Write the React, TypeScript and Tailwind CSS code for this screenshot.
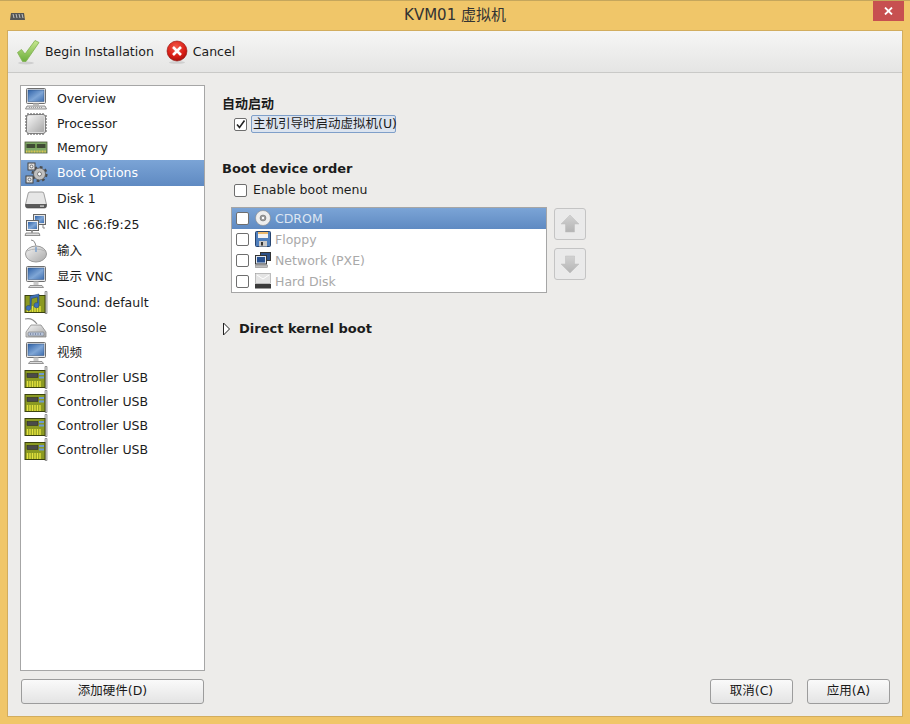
import React from 'react';

const UI_FONT = "font-['DejaVu_Sans','Noto_Sans_CJK_SC',sans-serif]";

const Defs = () => (
  <svg width="0" height="0" className="absolute">
    <defs>
      <linearGradient id="screen" x1="0" y1="0" x2="1" y2="1">
        <stop offset="0" stopColor="#2f62a8" />
        <stop offset="0.55" stopColor="#7fa6d6" />
        <stop offset="1" stopColor="#3e6fb0" />
      </linearGradient>
      <linearGradient id="metal" x1="0" y1="0" x2="1" y2="1">
        <stop offset="0" stopColor="#f4f4f4" />
        <stop offset="1" stopColor="#a8a8a8" />
      </linearGradient>
      <linearGradient id="check" x1="0" y1="0" x2="0" y2="1">
        <stop offset="0" stopColor="#c8e890" />
        <stop offset="1" stopColor="#6cae3c" />
      </linearGradient>
      <radialGradient id="red" cx="0.45" cy="0.3" r="0.8">
        <stop offset="0" stopColor="#f25a4a" />
        <stop offset="0.6" stopColor="#d81c14" />
        <stop offset="1" stopColor="#8e0f0a" />
      </radialGradient>
      <linearGradient id="arrow" x1="0" y1="0" x2="0" y2="1">
        <stop offset="0" stopColor="#d2d2d2" />
        <stop offset="1" stopColor="#b4b4b4" />
      </linearGradient>
    </defs>
  </svg>
);

const Monitor = ({ keyboard }: { keyboard?: boolean }) => (
  <svg width="24" height="24" viewBox="0 0 24 24">
    <rect x="2.500" y="1.500" width="19" height="15" rx="1" fill="#e9e9e9" stroke="#6f6f6f" />
    <rect x="4" y="3" width="16" height="11.500" fill="url(#screen)" stroke="#2d4f80" strokeWidth="0.5" />
    {keyboard ? (
      <>
        <rect x="9" y="16.500" width="6" height="2" fill="#bdbdbd" />
        <path d="M3 19h18l1.500 3h-21z" fill="#e2e2e2" stroke="#777" strokeWidth="0.8" />
        <path d="M5 20.500h14" stroke="#8a8a8a" strokeWidth="0.8" strokeDasharray="1 1" />
      </>
    ) : (
      <>
        <rect x="9.500" y="16.500" width="5" height="3.500" fill="#c9c9c9" />
        <path d="M6 20.500h12l1.500 2h-15z" fill="#dcdcdc" stroke="#7c7c7c" strokeWidth="0.8" />
      </>
    )}
  </svg>
);

const Chip = () => (
  <svg width="24" height="24" viewBox="0 0 24 24">
    <path d="M4 1v3M7 1v3M10 1v3M13 1v3M16 1v3M19 1v3M4 20v3M7 20v3M10 20v3M13 20v3M16 20v3M19 20v3M1 4h3M1 7h3M1 10h3M1 13h3M1 16h3M1 19h3M20 4h3M20 7h3M20 10h3M20 13h3M20 16h3M20 19h3" stroke="#4a4a4a" strokeWidth="1" />
    <rect x="2.500" y="2.500" width="19" height="19" rx="2.500" fill="#dedede" stroke="#6a6a6a" strokeWidth="0.8" />
    <rect x="4" y="4" width="16" height="16" rx="1" fill="url(#metal)" />
  </svg>
);

const Ram = () => (
  <svg width="24" height="24" viewBox="0 0 24 24">
    <rect x="1" y="6" width="22" height="11" fill="#7fa866" stroke="#4f5a3c" strokeWidth="0.8" />
    <rect x="2.500" y="8" width="19" height="4" fill="#3f4a34" />
    <path d="M12 8v4" stroke="#9be26a" strokeWidth="1" />
    <path d="M2 15.500h20" stroke="#e2c652" strokeWidth="2" strokeDasharray="1 0.6" />
  </svg>
);

const Gears = () => (
  <svg width="24" height="24" viewBox="0 0 24 24">
    <circle cx="15.500" cy="13" r="6.800" fill="none" stroke="#4c4c4c" strokeWidth="2.600" strokeDasharray="2.700 2.650" />
    <circle cx="15.500" cy="13" r="6" fill="#bfbfbf" stroke="#555" strokeWidth="0.8" />
    <circle cx="15.500" cy="13" r="2" fill="#fff" stroke="#555" strokeWidth="0.7" />
    <rect x="4" y="2" width="7" height="7" fill="#ddd" stroke="#444" />
    <circle cx="7.500" cy="5.500" r="1.400" fill="#fff" stroke="#444" strokeWidth="0.7" />
    <rect x="2" y="15" width="7" height="7" fill="#ddd" stroke="#444" />
    <circle cx="5.500" cy="18.500" r="1.400" fill="#fff" stroke="#444" strokeWidth="0.7" />
  </svg>
);

const Hdd = () => (
  <svg width="24" height="24" viewBox="0 0 24 24">
    <path d="M4 7q0-2 2-2h12q2 0 2 2l2.500 10.500h-21z" fill="#e6e6e6" stroke="#8a8a8a" strokeWidth="0.8" />
    <path d="M1.500 17.500h21v1.500q0 2-2 2h-17q-2 0-2-2z" fill="#5a5a5a" stroke="#444" strokeWidth="0.6" />
    <rect x="16" y="18.500" width="4" height="1.200" fill="#ddd" />
  </svg>
);

const Net = () => (
  <svg width="24" height="24" viewBox="0 0 24 24">
    <rect x="9.500" y="1.500" width="12" height="10" fill="#e6e6e6" stroke="#666" />
    <rect x="11" y="3" width="9" height="7" fill="url(#screen)" />
    <rect x="2.500" y="7.500" width="12" height="10" fill="#efefef" stroke="#666" />
    <rect x="4" y="9" width="9" height="7" fill="url(#screen)" />
    <path d="M2 20h13l1 2.500H1z" fill="#dcdcdc" stroke="#777" strokeWidth="0.8" />
    <path d="M8 17.500v2.500" stroke="#999" strokeWidth="2" />
    <path d="M19 12v3h2" stroke="#888" fill="none" />
  </svg>
);

const Mouse = () => (
  <svg width="24" height="24" viewBox="0 0 24 24">
    <path d="M7 1q3 0 4 3t1 4" stroke="#8a8a8a" fill="none" />
    <ellipse cx="12" cy="15" rx="10.500" ry="8" fill="url(#metal)" stroke="#9a9a9a" />
    <path d="M3 12q9-4 18 0" stroke="#b5b5b5" fill="none" />
    <path d="M12 8v5" stroke="#7ba0cc" strokeWidth="1.500" />
  </svg>
);

const Card = ({ note }: { note?: boolean }) => (
  <svg width="24" height="24" viewBox="0 0 24 24">
    <path d="M21 0.500h2v22h-2z" fill="#dcdcdc" stroke="#777" strokeWidth="0.7" />
    <rect x="1" y="4.500" width="20" height="17" fill="#8b9a22" stroke="#3c4310" />
    <path d="M3.500 15v6M6 15v6M8.500 15v6M11 15v6M13.500 15v6M16 15v6" stroke="#e4e23e" strokeWidth="1.400" />
    {note ? (
      <path d="M7 17a2.500 2.500 0 1 1-1-2V5l9-2v11a2.500 2.500 0 1 1-1.500-2V6l-6 1.500z" fill="#3f72b8" stroke="#1f3f72" strokeWidth="0.5" />
    ) : (
      <>
        <rect x="3" y="7.500" width="11" height="4" fill="#4a4a4a" stroke="#222" strokeWidth="0.5" />
        <rect x="15" y="7" width="5" height="2" fill="#6d9ad0" />
        <rect x="15" y="10.500" width="5" height="2" fill="#6d9ad0" />
      </>
    )}
  </svg>
);

const Serial = () => (
  <svg width="24" height="24" viewBox="0 0 24 24">
    <path d="M1 3q7-2 12 5" stroke="#8c8c8c" strokeWidth="1.200" fill="none" />
    <path d="M7 9h10l5 7v5H2v-5z" fill="url(#metal)" stroke="#8a8a8a" strokeWidth="0.8" />
    <rect x="4" y="16" width="16" height="4" rx="1" fill="#b7c3d8" stroke="#777" strokeWidth="0.6" />
    <path d="M6 18h12" stroke="#4a5a80" strokeDasharray="1 1.500" />
  </svg>
);

const rows = [
  { icon: <Monitor keyboard />, label: 'Overview', h: 'h-[25px]', nudge: true },
  { icon: <Chip />, label: 'Processor', h: 'h-[25px]', nudge: true },
  { icon: <Ram />, label: 'Memory', h: 'h-[24px]' },
  { icon: <Gears />, label: 'Boot Options', h: 'h-[26px]', selected: true },
  { icon: <Hdd />, label: 'Disk 1', h: 'h-[26px]' },
  { icon: <Net />, label: 'NIC :66:f9:25', h: 'h-[26px]' },
  { icon: <Mouse />, label: '输入', h: 'h-[26px]' },
  { icon: <Monitor />, label: '显示 VNC', h: 'h-[26px]' },
  { icon: <Card note />, label: 'Sound: default', h: 'h-[25px]', nudge: true },
  { icon: <Serial />, label: 'Console', h: 'h-[25px]', nudge: true },
  { icon: <Monitor />, label: '视频', h: 'h-[26px]' },
  { icon: <Card />, label: 'Controller USB', h: 'h-[24px]' },
  { icon: <Card />, label: 'Controller USB', h: 'h-[24px]' },
  { icon: <Card />, label: 'Controller USB', h: 'h-[24px]' },
  { icon: <Card />, label: 'Controller USB', h: 'h-[24px]' },
];

const CheckBox = ({ checked }: { checked?: boolean }) => (
  <span className="w-[13px] h-[13px] shrink-0 rounded-[2px] border border-[#6e6e6e] bg-white flex items-center justify-center">
    {checked && (
      <svg width="11" height="11" viewBox="0 0 11 11">
        <path d="M2 5.500l2.500 3L9.500 1.500" fill="none" stroke="#222" strokeWidth="1.600" />
      </svg>
    )}
  </span>
);

const Btn = ({ children, className }: { children: React.ReactNode; className: string }) => (
  <button className={`h-[25px] rounded-[3px] border border-[#9c9c9c] bg-gradient-to-b from-[#fafafa] to-[#e4e4e4] text-[12.5px] text-[#1a1a1a] flex items-center justify-center ${className}`}>
    {children}
  </button>
);

const Cd = () => (
  <svg width="16" height="16" viewBox="0 0 16 16">
    <circle cx="8" cy="8" r="7.500" fill="#eeeeee" stroke="#888" strokeWidth="0.6" />
    <circle cx="8" cy="8" r="3" fill="#9a9a9a" stroke="#666" strokeWidth="0.5" />
    <circle cx="8" cy="8" r="1.200" fill="#fff" />
  </svg>
);

const Floppy = () => (
  <svg width="16" height="16" viewBox="0 0 16 16">
    <rect x="0.500" y="0.500" width="15" height="15" rx="1" fill="#4f7fbd" stroke="#27446e" />
    <rect x="3" y="1" width="10" height="6" fill="#f2f2f2" />
    <path d="M3 2h10" stroke="#e8a53c" strokeWidth="1.500" />
    <rect x="4" y="10" width="8" height="5.500" fill="#c9c9c9" />
    <rect x="6" y="11" width="2" height="3.500" fill="#333" />
  </svg>
);

const SmallNet = () => (
  <svg width="16" height="16" viewBox="0 0 16 16">
    <rect x="5.500" y="0.500" width="10" height="8" fill="#2c4f86" stroke="#333" />
    <rect x="0.500" y="3.500" width="11" height="8.500" fill="#dfe6ef" stroke="#333" />
    <rect x="2" y="5" width="8" height="5.500" fill="#27508f" />
    <rect x="0.500" y="13" width="12" height="2.500" fill="#bdbdbd" stroke="#777" strokeWidth="0.5" />
  </svg>
);

const SmallHdd = () => (
  <svg width="16" height="16" viewBox="0 0 16 16">
    <rect x="0.500" y="0.500" width="15" height="10" fill="#e4e4e4" stroke="#999" strokeWidth="0.6" />
    <path d="M2 2l6 4 6-4" stroke="#fff" fill="none" />
    <rect x="0" y="11" width="16" height="4.500" fill="#3b3b3b" />
  </svg>
);

const bootRows = [
  { icon: <Cd />, label: 'CDROM', selected: true },
  { icon: <Floppy />, label: 'Floppy' },
  { icon: <SmallNet />, label: 'Network (PXE)' },
  { icon: <SmallHdd />, label: 'Hard Disk' },
];

const ArrowBtn = ({ d }: { d: string }) => (
  <div className="w-[32px] h-[32px] rounded-[3px] border border-[#c4c4c4] bg-[#eaeaea] flex items-center justify-center">
    <svg width="20" height="20" viewBox="0 0 20 20">
      <path d={d} fill="url(#arrow)" stroke="#bcbcbc" strokeWidth="0.5" />
    </svg>
  </div>
);

export default function App() {
  return (
    <div className={`${UI_FONT} w-[910px] h-[724px] flex flex-col bg-[#f0c669] border-t border-[#c5a65c] text-[12.5px] text-[#1c1c1c] overflow-hidden`}>
      <Defs />
      <div className="relative h-[29px] shrink-0 flex items-center justify-center text-[#333] text-[15px]">
        <span className="absolute left-[10px] top-[11px]">
          <svg width="15" height="8" viewBox="0 0 15 8">
            <path d="M1 1h13l1 7H0z" fill="#555" />
            <path d="M3 2l1 4M6 2l1 4M9 2l1 4M12 2l1 4" stroke="#ddd" strokeWidth="0.8" />
          </svg>
        </span>
        <span className="-mt-[1px]">KVM01 虚拟机</span>
        <span className="absolute right-[6px] top-0 w-[31px] h-[20px] bg-[#c75050] flex items-center justify-center">
          <svg width="9" height="8" viewBox="0 0 9 8">
            <path d="M1 0.500l7 7M8 0.500l-7 7" stroke="#fff" strokeWidth="1.800" />
          </svg>
        </span>
      </div>

      <div className="ml-[7px] mr-[7px] mb-[7px] h-[687px] border border-[#d2ad5e] bg-[#edecea] flex flex-col">
        <div className="h-[42px] shrink-0 border-b border-[#c9c9c7] bg-gradient-to-b from-[#f6f6f5] to-[#e5e5e4] flex items-center pl-[8px]">
          <svg width="24" height="26" viewBox="0 0 24 26" className="mr-[5px]">
            <ellipse cx="10" cy="24" rx="8" ry="1.500" fill="#cfcfcf" />
            <path d="M1.500 13.500l4-3 3.500 4.500L19 1.500l4 2L10 22.500H6.500z" fill="url(#check)" stroke="#7fb050" strokeWidth="0.8" />
          </svg>
          <span className="pt-[2px]">Begin Installation</span>
          <svg width="22" height="24" viewBox="0 0 22 24" className="ml-[12px] mr-[5px]">
            <ellipse cx="11" cy="22.500" rx="8" ry="1.300" fill="#cfcfcf" />
            <circle cx="11" cy="11" r="10" fill="url(#red)" stroke="#8e0f0a" strokeWidth="0.6" />
            <path d="M7 7l8 8M15 7l-8 8" stroke="#fff" strokeWidth="2.600" />
          </svg>
          <span className="pt-[2px]">Cancel</span>
        </div>

        <div className="flex-1 flex pl-[12px] pr-[12px] pt-[12px] pb-[12px] min-h-0">
          <div className="w-[185px] shrink-0 flex flex-col">
            <div className="flex-1 bg-white border border-[#a6a6a6]">
              {rows.map((r, i) => (
                <div key={i} className={`${r.h} flex items-center pl-[3px] ${r.selected ? 'bg-gradient-to-b from-[#7ba4d6] to-[#5f8ac2] text-white' : ''}`}>
                  <span className="w-[24px] h-[24px] shrink-0">{r.icon}</span>
                  <span className={`ml-[9px] whitespace-pre ${r.nudge ? 'pt-[2px]' : ''}`}>{r.label}</span>
                </div>
              ))}
            </div>
            <Btn className="mt-[8px] ml-[1px] w-[183px]">添加硬件(D)</Btn>
          </div>

          <div className="flex-1 ml-[17px] flex flex-col min-w-0">
            <div className="mt-[11px] h-[16px] leading-[16px] font-bold text-[13px]">自动启动</div>
            <div className="mt-[3px] h-[18px] flex items-center pl-[12px]">
              <CheckBox checked />
              <span className="ml-[4px] h-[18px] w-[145px] pl-[1px] leading-[15px] whitespace-nowrap border border-[#7f9fc9] rounded-[2px] bg-[#dce4ef]">主机引导时启动虚拟机(U)</span>
            </div>
            <div className="mt-[28px] h-[16px] leading-[16px] font-bold text-[13px]">Boot device order</div>
            <div className="mt-[5px] h-[16px] flex items-center pl-[12px]">
              <CheckBox />
              <span className="ml-[6px]">Enable boot menu</span>
            </div>
            <div className="mt-[9px] pl-[9px] flex">
              <div className="w-[316px] h-[86px] border border-[#a6a6a6] bg-white">
                {bootRows.map((r, i) => (
                  <div key={i} className={`h-[21px] flex items-center pl-[4px] ${r.selected ? 'bg-gradient-to-b from-[#7ba4d6] to-[#5f8ac2] text-[#dde6f2]' : 'text-[#a9a9a9]'}`}>
                    <CheckBox />
                    <span className="ml-[6px] w-[16px] h-[16px] shrink-0 -mt-[2px]">{r.icon}</span>
                    <span className="ml-[4px] pt-[2px]">{r.label}</span>
                  </div>
                ))}
              </div>
              <div className="ml-[7px] mt-[1px] flex flex-col gap-[8px]">
                <ArrowBtn d="M10 1l9 9h-4.500v8h-9v-8H1z" />
                <ArrowBtn d="M5.500 2h9v8H19l-9 9-9-9h4.500z" />
              </div>
            </div>
            <div className="mt-[28px] h-[16px] flex items-center">
              <svg width="9" height="14" viewBox="0 0 9 14">
                <path d="M1.500 1l6 6-6 6z" fill="#fff" stroke="#222" />
              </svg>
              <span className="ml-[8px] font-bold text-[13px]">Direct kernel boot</span>
            </div>
            <div className="mt-auto flex justify-end gap-[14px]">
              <Btn className="w-[83px]">取消(C)</Btn>
              <Btn className="w-[83px]">应用(A)</Btn>
            </div>
          </div>
        </div>
      </div>
    </div>
  );
}
